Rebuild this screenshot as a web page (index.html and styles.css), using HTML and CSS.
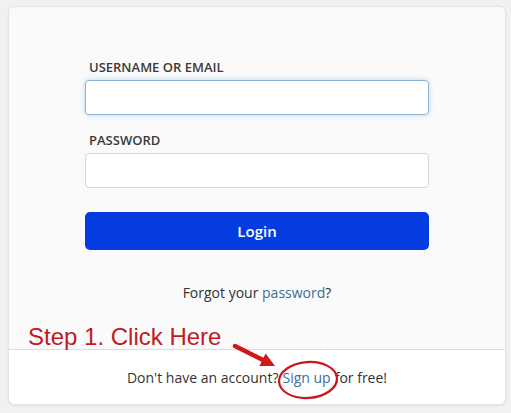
FILE: index.html
```html
<!DOCTYPE html>
<html lang="en">
<head>
  <meta charset="UTF-8">
  <meta name="viewport" content="width=device-width, initial-scale=1.0">
  <title>Login</title>
  <link rel="stylesheet" href="styles.css">
</head>
<body>
  <article class="card">
    <form class="login">
      <label class="field">
        <span class="label">Username or Email</span>
        <input type="text" class="input focused" autofocus>
      </label>
      <label class="field">
        <span class="label">Password</span>
        <input type="password" class="input">
      </label>
      <button type="button" class="btn">Login</button>
      <p class="forgot">Forgot your <a href="#">password</a>?</p>
    </form>

    <footer class="signup">
      Don't have an account? <a href="#" class="signup-link">Sign up</a> for free!
    </footer>

    <!-- annotation drawn over the screenshot -->
    <span class="step">Step 1. Click Here</span>
    <svg class="arrow" width="50" height="30" viewBox="0 0 50 30">
      <line x1="4" y1="3" x2="33" y2="17.5" stroke="#d01818" stroke-width="4.5" stroke-linecap="round"/>
      <polygon points="44,23 28.4,23 34.6,10.4" fill="#d01818"/>
    </svg>
    <svg class="ring" width="64" height="42" viewBox="0 0 64 42">
      <ellipse cx="32" cy="21" rx="29" ry="18" fill="none" stroke="#c8181e" stroke-width="2.2" transform="rotate(-4 32 21)"/>
    </svg>
  </article>
</body>
</html>
```

FILE: styles.css
```css
body {
  margin: 0;
  padding: 6px 5px 7px 8px;
  background-color: #f1f1f1;
  font-family: "Open Sans", "Liberation Sans", sans-serif;
  color: #333;
}

.card {
  position: relative;
  width: 498px;
  height: 399px;
  box-sizing: border-box;
  display: flex;
  flex-direction: column;
  background-color: #fafafa;
  border: 1px solid #e4e4e4;
  border-radius: 6px;
  box-shadow: 0 1px 2px rgba(0, 0, 0, 0.08);
}

.login {
  width: 344px;
  margin: 0 auto;
  padding-top: 51px;
  flex: 1;
}

.field {
  display: block;
  margin-bottom: 16px;
}

.label {
  display: block;
  font-size: 13px;
  font-weight: 600;
  color: #3a3a3a;
  text-transform: uppercase;
  margin: 0 0 4px 4px;
}

.input {
  display: block;
  width: 100%;
  height: 35px;
  box-sizing: border-box;
  border: 1px solid #d6d6d6;
  border-radius: 4px;
  background-color: #fff;
  outline: none;
}

.focused {
  border-color: #8fb3d3;
  box-shadow: 0 0 5px rgba(102, 175, 233, 0.45);
}

.btn {
  display: block;
  width: 100%;
  height: 38px;
  margin-top: 24px;
  border: none;
  border-radius: 5px;
  background-color: #053ce2;
  color: #fff;
  font-family: inherit;
  font-size: 15px;
  font-weight: 600;
}

.forgot {
  margin: 33px 0 0;
  text-align: center;
  font-size: 14px;
}

a {
  color: #3a6d99;
  text-decoration: none;
}

.signup {
  height: 54px;
  display: flex;
  align-items: center;
  justify-content: center;
  gap: 4px;
  border-top: 1px solid #dcdcdc;
  background-color: #fff;
  border-radius: 0 0 6px 6px;
  font-size: 14px;
}

.step {
  position: absolute;
  left: 19px;
  top: 316px;
  font-family: "Liberation Sans", Arial, sans-serif;
  font-size: 24px;
  color: #c01b22;
}

.arrow {
  position: absolute;
  left: 222px;
  top: 336px;
}

.ring {
  position: absolute;
  left: 267px;
  top: 352px;
}
```
